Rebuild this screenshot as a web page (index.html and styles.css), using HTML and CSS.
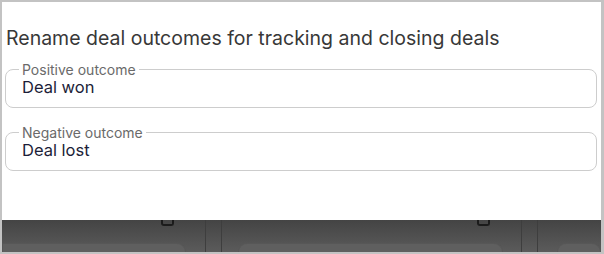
FILE: index.html
```html
<!DOCTYPE html>
<html>
<head>
<meta charset="utf-8">
<link rel="stylesheet" href="styles.css">
</head>
<body>
<div class="frame">
  <div class="panel">
    <h2 class="title">Rename deal outcomes for tracking and closing deals</h2>
    <fieldset class="field">
      <legend class="label">Positive outcome</legend>
      <div class="value">Deal won</div>
    </fieldset>
    <fieldset class="field field-gap">
      <legend class="label">Negative outcome</legend>
      <div class="value">Deal lost</div>
    </fieldset>
  </div>
  <div class="backdrop">
    <div class="col col-a">
      <div class="knob"></div>
      <div class="card"></div>
    </div>
    <div class="divider"></div>
    <div class="col col-b">
      <div class="knob"></div>
      <div class="card"></div>
    </div>
    <div class="divider"></div>
    <div class="col col-c">
      <div class="card"></div>
    </div>
  </div>
</div>
</body>
</html>
```
FILE: styles.css
```css
* { box-sizing: border-box; }
html, body { margin: 0; padding: 0; }
body {
  width: 604px;
  height: 254px;
  background: #c3c3c3;
  font-family: Inter, "Noto Sans", sans-serif;
}
.frame {
  width: 604px;
  height: 254px;
  border-style: solid;
  border-color: #c3c3c3;
  border-width: 2px 3px 2px 2px;
  display: flex;
  flex-direction: column;
  overflow: hidden;
}
.panel {
  background: #fff;
  height: 218px;
  padding: 25px 4px 0 3px;
  flex: none;
}
.title {
  margin: 0 0 13px 1px;
  font-size: 19.5px;
  line-height: 22px;
  font-weight: 400;
  color: #383838;
}
.field {
  margin: 0;
  border: 1px solid #cdcdcd;
  border-radius: 8px;
  padding: 0 16px 10px 16px;
}
.field-gap { margin-top: 17px; }
.label {
  margin-left: -3px;
  padding: 0 3px;
  font-size: 14px;
  line-height: 15px;
  color: #6a6a6a;
}
.value {
  font-size: 16.5px;
  line-height: 20px;
  color: #1c1e38;
}
.backdrop {
  flex: 1;
  background: linear-gradient(#444444, #5b5b5b);
  display: flex;
  align-items: stretch;
}
.col {
  display: flex;
  flex-direction: column;
  justify-content: space-between;
}
.col-a { width: 203px; padding-right: 19px; flex: none; }
.col-b { width: 299px; padding-left: 16px; padding-right: 18px; flex: none; }
.col-c { flex: 1; padding-left: 19px; }
.divider {
  width: 17px;
  border-left: 1px solid #3e3e3e;
  border-right: 1px solid #3e3e3e;
  flex: none;
}
.knob {
  align-self: flex-end;
  width: 13px;
  height: 6px;
  border: 2px solid #1b1b1b;
  border-top: none;
  border-radius: 0 0 3px 3px;
  margin-right: 12px;
}
.col-b .knob { margin-right: 13px; }
.card {
  margin-top: auto;
  height: 9px;
  background: #5f5f5f;
  border-radius: 10px 10px 0 0;
  border: 1px solid #575757;
  border-bottom: none;
}
.col-a .card { border-top-left-radius: 0; }
```
